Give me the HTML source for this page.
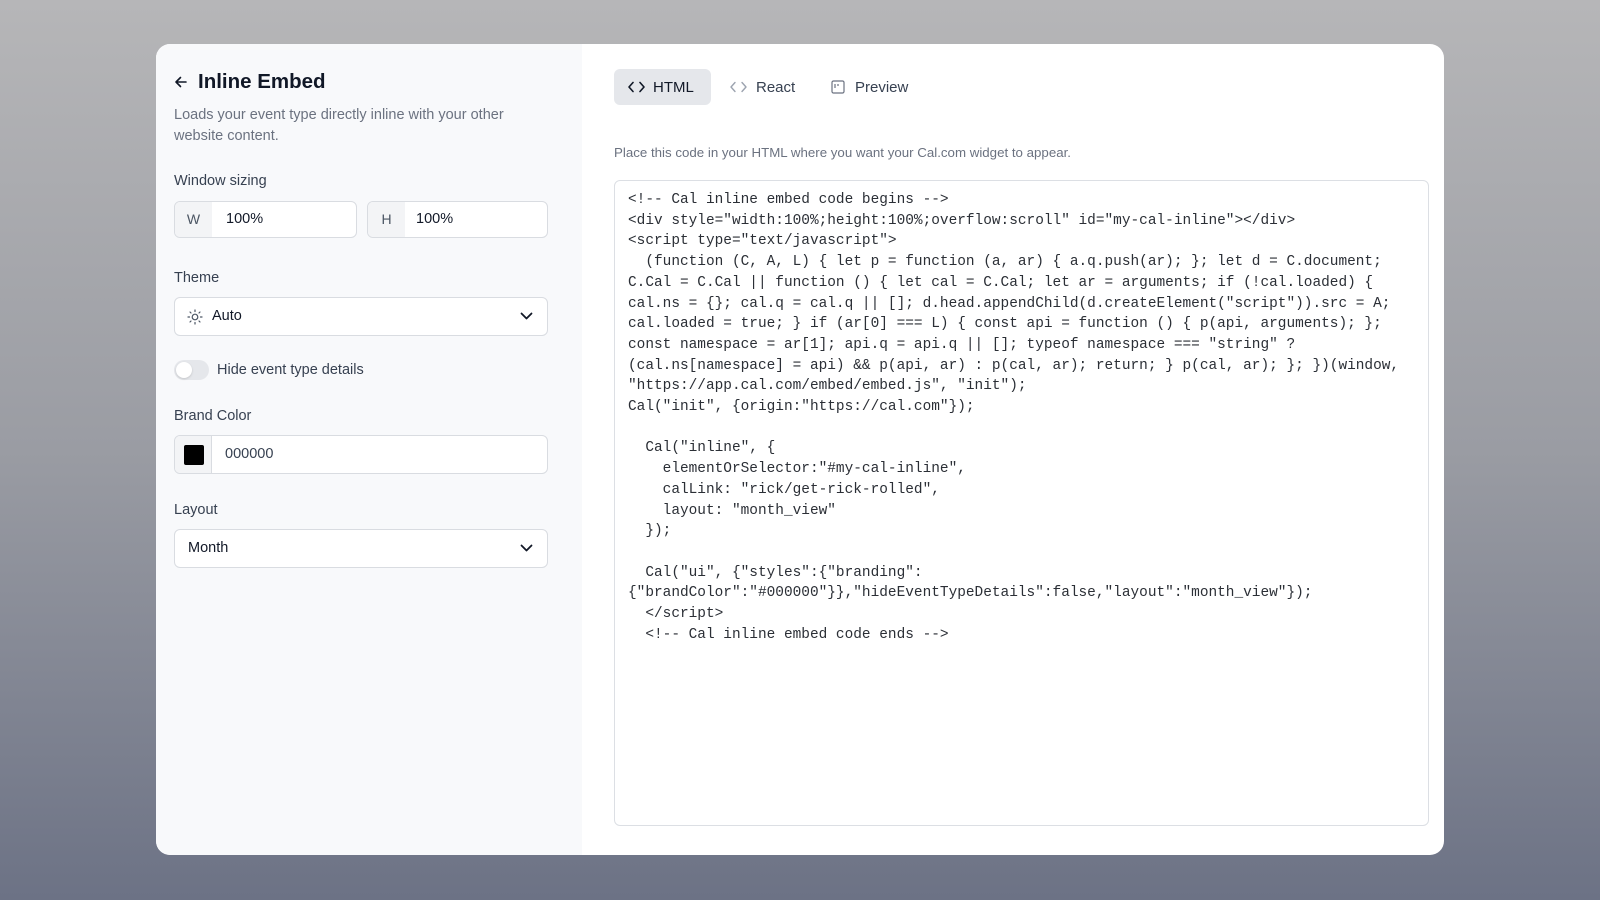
<!DOCTYPE html>
<html><head><meta charset="utf-8"><style>
*{box-sizing:border-box;margin:0;padding:0}
body{width:1600px;height:900px;overflow:hidden;font-family:"Liberation Sans",sans-serif;background:linear-gradient(180deg,#b6b6b8 0%,#9a9ca3 50%,#6c7285 100%);position:relative}
.card{position:absolute;left:156px;top:44px;width:1288px;height:811px;background:#fff;border-radius:14px;overflow:hidden}
.left{position:absolute;left:0;top:0;width:426px;height:100%;background:#f8f9fb}
.abs{position:absolute}
.lbl{position:absolute;left:18px;font-size:14.5px;color:#374151;font-weight:500}
.box{position:absolute;background:#fff;border:1px solid #d9dce1;border-radius:6px}
.code{position:absolute;left:458px;top:136px;width:815px;height:646px;border:1px solid #dcdfe4;border-radius:6px;background:#fff}
pre{position:absolute;left:13px;top:9px;font-family:"Liberation Mono",monospace;font-size:14.45px;line-height:20.7px;color:#2b2f36}
</style></head><body>
<div class="card">
<div class="left">
 <svg class="abs" style="left:18px;top:31px" width="14" height="14" viewBox="0 0 14 14"><path d="M12 7H2M6.5 2.5L2 7l4.5 4.5" stroke="#111827" stroke-width="1.6" fill="none" stroke-linecap="round" stroke-linejoin="round"/></svg>
 <div class="abs" style="left:42px;top:26px;font-size:20.5px;font-weight:700;color:#111827">Inline Embed</div>
 <div class="abs" style="left:18px;top:61px;width:380px;font-size:14.5px;line-height:21px;color:#6b7280">Loads your event type directly inline with your other website content.</div>
 <div class="lbl" style="top:129px">Window sizing</div>
 <div class="box" style="left:18px;top:157px;width:183px;height:37px;overflow:hidden"><div class="abs" style="left:0;top:0;width:37px;height:100%;background:#f3f4f6;color:#4b5563;font-size:14px;line-height:35px;text-align:center">W</div><div class="abs" style="left:51px;top:0;line-height:35px;font-size:14.5px;color:#111827">100%</div></div>
 <div class="box" style="left:211px;top:157px;width:181px;height:37px;overflow:hidden"><div class="abs" style="left:0;top:0;width:37px;height:100%;background:#f3f4f6;color:#4b5563;font-size:14px;line-height:35px;text-align:center">H</div><div class="abs" style="left:48px;top:0;line-height:35px;font-size:14.5px;color:#111827">100%</div></div>
 <div class="lbl" style="top:226px">Theme</div>
 <div class="box" style="left:18px;top:253px;width:374px;height:39px">
  <svg class="abs" style="left:12px;top:11px" width="16" height="16" viewBox="0 0 16 16" fill="none" stroke="#4b5563" stroke-width="1.2" stroke-linecap="round"><circle cx="8" cy="8" r="2.8"/><path d="M8 1v1.5M8 13.5V15M1 8h1.5M13.5 8H15M3 3l1 1M12 12l1 1M3 13l1-1M12 4l1-1"/></svg>
  <div class="abs" style="left:37px;top:0;line-height:37px;font-size:14.5px;color:#111827">Auto</div>
  <svg class="abs" style="right:14px;top:14px" width="13" height="9" viewBox="0 0 13 9"><path d="M1.5 1.5l5 5 5-5" stroke="#111827" stroke-width="1.8" fill="none" stroke-linecap="round" stroke-linejoin="round"/></svg>
 </div>
 <div class="abs" style="left:18px;top:316px;width:35px;height:20px;border-radius:10px;background:#e5e7eb"><div class="abs" style="left:2px;top:2px;width:16px;height:16px;border-radius:8px;background:#fff;box-shadow:0 1px 2px rgba(0,0,0,.15)"></div></div>
 <div class="abs" style="left:61px;top:318px;font-size:14.5px;color:#374151">Hide event type details</div>
 <div class="lbl" style="top:364px">Brand Color</div>
 <div class="box" style="left:18px;top:391px;width:374px;height:39px;overflow:hidden">
  <div class="abs" style="left:0;top:0;width:37px;height:100%;background:#f3f4f6;border-right:1px solid #d9dce1"></div>
  <div class="abs" style="left:9px;top:9px;width:20px;height:20px;background:#000;border-radius:2px"></div>
  <div class="abs" style="left:50px;top:0;line-height:37px;font-size:14.5px;color:#374151">000000</div>
 </div>
 <div class="lbl" style="top:458px">Layout</div>
 <div class="box" style="left:18px;top:485px;width:374px;height:39px">
  <div class="abs" style="left:13px;top:0;line-height:37px;font-size:14.5px;color:#111827">Month</div>
  <svg class="abs" style="right:14px;top:14px" width="13" height="9" viewBox="0 0 13 9"><path d="M1.5 1.5l5 5 5-5" stroke="#111827" stroke-width="1.8" fill="none" stroke-linecap="round" stroke-linejoin="round"/></svg>
 </div>
</div>
<div class="abs" style="left:458px;top:25px;width:97px;height:36px;background:#e5e7eb;border-radius:6px"></div>
<svg class="abs" style="left:472px;top:37px" width="17" height="12" viewBox="0 0 17 12"><path d="M5 1.5L1 6l4 4.5M12 1.5l4 4.5-4 4.5" stroke="#111827" stroke-width="1.6" fill="none" stroke-linecap="round" stroke-linejoin="round"/></svg>
<div class="abs" style="left:497px;top:35px;font-size:15px;font-weight:500;color:#111827">HTML</div>
<svg class="abs" style="left:574px;top:37px" width="17" height="12" viewBox="0 0 17 12"><path d="M5 1.5L1 6l4 4.5M12 1.5l4 4.5-4 4.5" stroke="#9ca3af" stroke-width="1.4" fill="none" stroke-linecap="round" stroke-linejoin="round"/></svg>
<div class="abs" style="left:600px;top:35px;font-size:15px;color:#374151">React</div>
<svg class="abs" style="left:675px;top:36px" width="14" height="14" viewBox="0 0 14 14" fill="none" stroke="#6b7280" stroke-width="1.2"><rect x="1" y="1" width="12" height="12" rx="1.5"/><path d="M4 4v4M7 4v2"/></svg>
<div class="abs" style="left:699px;top:35px;font-size:15px;color:#374151">Preview</div>
<div class="abs" style="left:458px;top:101px;font-size:13.3px;color:#6b7280">Place this code in your HTML where you want your Cal.com widget to appear.</div>
<div class="code"><pre>&lt;!-- Cal inline embed code begins --&gt;
&lt;div style="width:100%;height:100%;overflow:scroll" id="my-cal-inline"&gt;&lt;/div&gt;
&lt;script type="text/javascript"&gt;
  (function (C, A, L) { let p = function (a, ar) { a.q.push(ar); }; let d = C.document;
C.Cal = C.Cal || function () { let cal = C.Cal; let ar = arguments; if (!cal.loaded) {
cal.ns = {}; cal.q = cal.q || []; d.head.appendChild(d.createElement("script")).src = A;
cal.loaded = true; } if (ar[0] === L) { const api = function () { p(api, arguments); };
const namespace = ar[1]; api.q = api.q || []; typeof namespace === "string" ?
(cal.ns[namespace] = api) &amp;&amp; p(api, ar) : p(cal, ar); return; } p(cal, ar); }; })(window,
"https://app.cal.com/embed/embed.js", "init");
Cal("init", {origin:"https://cal.com"});

  Cal("inline", {
    elementOrSelector:"#my-cal-inline",
    calLink: "rick/get-rick-rolled",
    layout: "month_view"
  });

  Cal("ui", {"styles":{"branding":
{"brandColor":"#000000"}},"hideEventTypeDetails":false,"layout":"month_view"});
  &lt;/script&gt;
  &lt;!-- Cal inline embed code ends --&gt;</pre></div>
</div>
</body></html>
